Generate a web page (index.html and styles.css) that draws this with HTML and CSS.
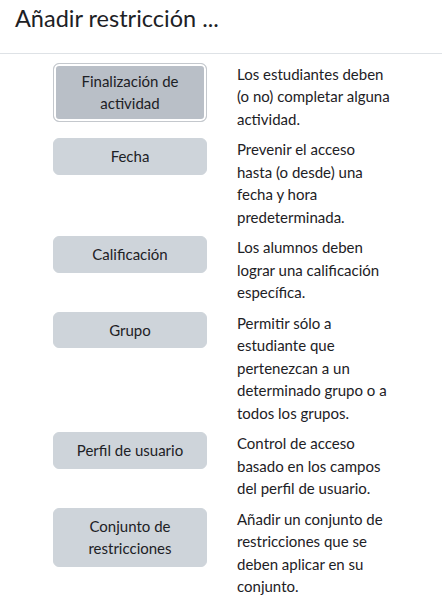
FILE: index.html
```html
<!DOCTYPE html>
<html lang="es">
<head>
<meta charset="utf-8">
<title>Añadir restricción</title>
<link rel="stylesheet" href="styles.css">
</head>
<body>
<div class="modal">
  <div class="modal-header">
    <h5 class="modal-title">Añadir restricción ...</h5>
  </div>
  <div class="modal-body">
    <div class="options">
      <button class="btn btn-focused">Finalización de actividad</button>
      <div class="desc">Los estudiantes deben (o no) completar alguna actividad.</div>

      <button class="btn">Fecha</button>
      <div class="desc">Prevenir el acceso hasta (o desde) una fecha y hora predeterminada.</div>

      <button class="btn">Calificación</button>
      <div class="desc">Los alumnos deben lograr una calificación específica.</div>

      <button class="btn">Grupo</button>
      <div class="desc">Permitir sólo a estudiante que pertenezcan a un determinado grupo o a todos los grupos.</div>

      <button class="btn">Perfil de usuario</button>
      <div class="desc">Control de acceso basado en los campos del perfil de usuario.</div>

      <button class="btn">Conjunto de restricciones</button>
      <div class="desc">Añadir un conjunto de restricciones que se deben aplicar en su conjunto.</div>
    </div>
  </div>
</div>
</body>
</html>
```

FILE: styles.css
```css
* {
  box-sizing: border-box;
}

html, body {
  margin: 0;
  padding: 0;
  background: #fff;
}

body {
  font-family: Lato, "Noto Sans", "Liberation Sans", sans-serif;
  font-size: 15px;
  line-height: 1.5;
  color: #1d2125;
}

.modal-header {
  padding: 4px 15px 0 15px;
  height: 54px;
  border-bottom: 1px solid #dee2e6;
}

.modal-title {
  margin: 0;
  font-size: 23.5px;
  font-weight: 400;
  line-height: 1.2;
  color: #1d2125;
}

.modal-body {
  padding: 8.5px 0 0 53px;
}

.options {
  display: grid;
  grid-template-columns: 154px 154px;
  column-gap: 30px;
  row-gap: 8px;
  align-items: start;
}

.btn {
  font-family: inherit;
  font-size: 15px;
  line-height: 1.5;
  color: #1d2125;
  background: #ced4da;
  border: 1px solid #ced4da;
  border-radius: 6px;
  padding: 6px 12px;
  margin: 0;
  width: 154px;
  text-align: center;
  cursor: pointer;
}

.btn-focused {
  background: #b9bfc7;
  border-color: #c4c8cd;
  box-shadow: inset 0 0 0 2px #fff;
}

.desc {
  width: 154px;
}
```
